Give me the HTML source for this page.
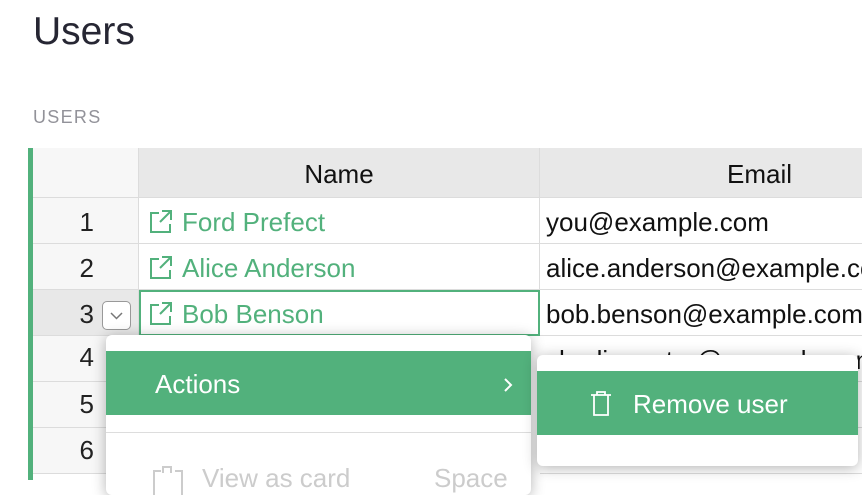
<!DOCTYPE html>
<html><head><style>
body{margin:0;width:862px;height:480px;overflow:hidden;background:#fff;font-family:"Liberation Sans",sans-serif;position:relative}
.t{position:absolute;left:33px;top:10px;font-size:39px;color:#262633}
.l{position:absolute;left:33px;top:107px;font-size:18px;color:#929299;letter-spacing:1.3px}
.bar{position:absolute;left:28px;top:148px;width:5px;height:332px;background:#52b17c}
.c{position:absolute;box-sizing:border-box;font-size:26px;line-height:48px;border-bottom:1px solid #dcdcdc;border-right:1px solid #dcdcdc;white-space:nowrap;overflow:hidden}
.n{left:33px;width:106px;background:#f7f7f7;text-align:right;padding-right:44px;color:#222}
.nm{left:139px;width:401px;color:#52b17c;padding-left:43px}
.em{left:540px;width:330px;color:#111;padding-left:6px}
.h{background:#e8e8e8;color:#111;text-align:center;padding:0}
.menu{position:absolute;background:#fff;border-radius:6px;box-shadow:0 2px 14px rgba(0,0,0,.3)}
.hi{position:absolute;left:0;right:0;background:#52b17c;color:#fff;font-size:26px}
.ic{position:absolute;left:10px;top:11px}
</style></head><body>
<div class="t">Users</div>
<div class="l">USERS</div>
<div class="bar"></div>
<div class="c n" style="top:148px;height:50px"></div>
<div class="c nm h" style="top:148px;height:50px;line-height:52px;padding:0">Name</div>
<div class="c em h" style="top:148px;height:50px;line-height:52px;padding:0;width:440px">Email</div>

<div class="c n" style="top:198px;height:46px">1</div>
<div class="c nm" style="top:198px;height:46px"><svg class="ic" width="24" height="24"><path d="M10 4H2v19h19v-8M13 2h9v9M22 2L11 13" fill="none" stroke="#52b17c" stroke-width="2"/></svg>Ford Prefect</div>
<div class="c em" style="top:198px;height:46px">you@example.com</div>
<div class="c n" style="top:244px;height:46px">2</div>
<div class="c nm" style="top:244px;height:46px"><svg class="ic" width="24" height="24"><path d="M10 4H2v19h19v-8M13 2h9v9M22 2L11 13" fill="none" stroke="#52b17c" stroke-width="2"/></svg>Alice Anderson</div>
<div class="c em" style="top:244px;height:46px">alice.anderson@example.com</div>
<div class="c n" style="top:290px;height:46px;background:#e8e8e8">3</div>
<div class="c nm" style="top:290px;height:46px;border:2px solid #52b17c;line-height:44px;padding-left:41px"><svg class="ic" style="left:8px;top:9px" width="24" height="24"><path d="M10 4H2v19h19v-8M13 2h9v9M22 2L11 13" fill="none" stroke="#52b17c" stroke-width="2"/></svg>Bob Benson</div>
<div class="c em" style="top:290px;height:46px">bob.benson@example.com</div>
<div style="position:absolute;left:102px;top:301px;width:29px;height:29px;box-sizing:border-box;border:1px solid #999;border-radius:5px;background:#fff"><svg width="27" height="27"><path d="M8 11l5.5 5.5L19 11" fill="none" stroke="#777" stroke-width="1.5"/></svg></div>
<div class="c n" style="top:336px;height:46px;line-height:42px">4</div>
<div class="c em" style="top:336px;height:46px">charlie.carter@example.com</div>
<div class="c n" style="top:382px;height:46px;line-height:44px">5</div>
<div class="c em" style="top:382px;height:46px">m</div>
<div class="c n" style="top:428px;height:46px;line-height:44px">6</div>
<div class="c em" style="top:428px;height:46px">c</div>

<div class="menu" style="left:106px;top:335px;width:425px;height:160px">
<div class="hi" style="top:16px;height:64px;line-height:66px;padding-left:49px">Actions<svg style="position:absolute;right:18px;top:26px" width="10" height="16"><path d="M2 2l6 6-6 6" fill="none" stroke="#fff" stroke-width="2"/></svg></div>
<div style="position:absolute;left:0;right:0;top:97px;border-top:1px solid #ddd"></div>
<svg style="position:absolute;left:46px;top:130px" width="32" height="30"><path d="M9 6H2v24M23 6h7v24M11 8V2h8v6" fill="none" stroke="#ccc" stroke-width="2"/></svg>
<div style="position:absolute;left:96px;top:128px;font-size:26px;color:#ccc">View as card<span style="position:absolute;left:232px">Space</span></div>
</div>
<div class="menu" style="left:537px;top:355px;width:321px;height:111px">
<div class="hi" style="top:16px;height:64px;line-height:66px;padding-left:96px">Remove user
<svg style="position:absolute;left:52px;top:20px" width="24" height="26"><path d="M2 4h20M8 4V1h8v3M5 4v20h14V4" fill="none" stroke="#fff" stroke-width="1.8"/></svg></div>
</div>
</body></html>
